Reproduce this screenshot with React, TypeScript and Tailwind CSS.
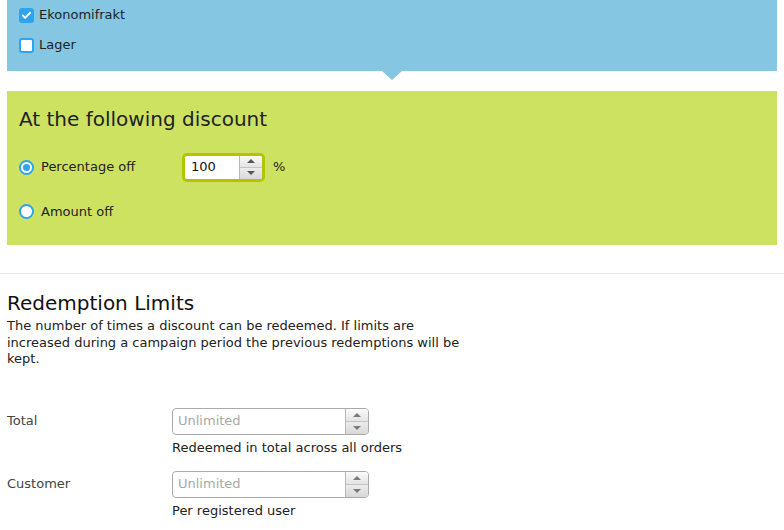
import { Check } from 'lucide-react';

function Spinner({ small }: { small?: boolean }) {
  return (
    <div className="flex h-full w-[23px] flex-col border-l border-[#b9b9b9]">
      <button className="flex flex-1 items-center justify-center bg-gradient-to-b from-[#fafafa] to-[#e4e4e4]">
        <span className={`border-x-[4px] border-b-[4px] border-x-transparent ${small ? 'border-b-[#7a7a7a]' : 'border-b-[#555]'}`} />
      </button>
      <button className="flex flex-1 items-center justify-center border-t border-[#c4c4c4] bg-gradient-to-b from-[#ececec] to-[#d8d8d8]">
        <span className={`border-x-[4px] border-t-[4px] border-x-transparent ${small ? 'border-t-[#7a7a7a]' : 'border-t-[#555]'}`} />
      </button>
    </div>
  );
}

function LimitRow({ label, hint }: { label: string; hint: string }) {
  return (
    <div className="flex">
      <div className="w-[165px] pt-[3px] text-[#444]">{label}</div>
      <div className="flex flex-col">
        <div className="flex h-[27px] w-[197px] overflow-hidden rounded-[4px] border border-[#a9a9a9] bg-white">
          <input
            placeholder="Unlimited"
            className="min-w-0 flex-1 px-[5px] text-[13px] text-[#222] outline-none placeholder:text-[#a8a8a8]"
          />
          <Spinner small />
        </div>
        <p className="mt-[5px] leading-[16px] text-[#222]">{hint}</p>
      </div>
    </div>
  );
}

export default function App() {
  return (
    <main className="w-[784px] bg-white pb-4 font-['DejaVu_Sans',Verdana,sans-serif] text-[13px] text-[#222]">
      {/* Leveransmetoder */}
      <section className="relative mx-[7px] flex h-[71px] flex-col bg-[#85c7e3] px-3">
        {[
          { name: 'Ekonomifrakt', on: true },
          { name: 'Lager', on: false },
        ].map((o) => (
          <label key={o.name} className="flex h-[30px] items-center gap-[5px]">
            <span
              className={`flex size-[15px] items-center justify-center rounded-[3px] border-2 border-[#2ea3f0] ${
                o.on ? 'bg-[#2ea3f0]' : 'bg-white'
              }`}
            >
              {o.on && <Check className="size-[11px] text-white" strokeWidth={4} />}
            </span>
            <span>{o.name}</span>
          </label>
        ))}
        <span className="absolute left-[375px] top-full border-x-[10px] border-t-[9px] border-x-transparent border-t-[#85c7e3]" />
      </section>

      {/* Rabatt */}
      <section className="mx-[7px] mt-[20px] h-[154px] bg-[#cde261] px-3 pt-4">
        <h2 className="text-[20px] leading-[24px] text-[#222]">At the following discount</h2>
        <div className="mt-[21px] flex h-[30px] items-center">
          <label className="flex w-[163px] items-center gap-[7px]">
            <span className="flex size-[15px] items-center justify-center rounded-full border-2 border-[#2ea3f0] bg-white">
              <span className="size-[7px] rounded-full bg-[#2ea3f0]" />
            </span>
            <span>Percentage off</span>
          </label>
          <div className="flex h-[29px] w-[83px] overflow-hidden rounded-[5px] border-[3px] border-[#b5c400] bg-white">
            <input
              defaultValue="100"
              className="min-w-0 flex-1 px-[6px] text-[13px] text-[#111] outline-none"
            />
            <Spinner />
          </div>
          <span className="ml-[8px]">%</span>
        </div>
        <label className="mt-[20px] flex items-center gap-[7px]">
          <span className="size-[15px] rounded-full border-2 border-[#2ea3f0] bg-white" />
          <span>Amount off</span>
        </label>
      </section>

      <hr className="mt-[28px] border-t border-[#e8e8e8]" />

      {/* Inlösningsgränser */}
      <section className="px-[7px] pt-[17px]">
        <h2 className="text-[20px] leading-[24px] text-[#111]">Redemption Limits</h2>
        <p className="mt-[3px] w-[460px] leading-[16.5px]">
          The number of times a discount can be redeemed. If limits are increased during a campaign period the
          previous redemptions will be kept.
        </p>
        <div className="mt-[40px] flex flex-col gap-[15px]">
          <LimitRow label="Total" hint="Redeemed in total across all orders" />
          <LimitRow label="Customer" hint="Per registered user" />
        </div>
      </section>
    </main>
  );
}
